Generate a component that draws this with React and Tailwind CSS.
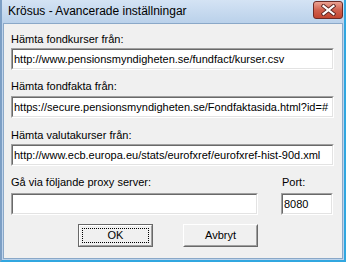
import React from "react";

const font = { fontFamily: '"Liberation Sans", Arial, sans-serif' };

function TextBox({ value, className = "" }) {
  return (
    <div
      className={
        "h-[22px] bg-white border border-t-[#a0a0a0] border-l-[#a0a0a0] border-b-white border-r-white " +
        className
      }
    >
      <div className="h-full border border-t-[#696969] border-l-[#696969] border-b-[#e3e3e3] border-r-[#e3e3e3] pl-[1px] text-[11px] leading-[18px] text-black whitespace-nowrap overflow-hidden">
        {value}
      </div>
    </div>
  );
}

function Label({ children, className = "" }) {
  return <div className={"text-[11px] leading-[13px] text-black " + className}>{children}</div>;
}

export default function App() {
  return (
    <div
      className="w-[346px] h-[262px] flex flex-col bg-[#bfd4ec] border-l-2 border-l-[#7d9fc5] border-r-2 border-r-[#31a7e0] border-b-2 border-b-[#31a7e0]"
      style={font}
    >
      <div className="h-[23px] flex items-start bg-gradient-to-b from-[#d4e3f4] to-[#bad1ea] pl-[6px] pr-[1px] shrink-0">
        <div className="mt-[4px] text-[12px] leading-[14px] text-black">Krösus - Avancerade inställningar</div>
        <div className="ml-auto mt-[1px] w-[30px] h-[18px] rounded-[3px] border border-[#6d2b26] bg-gradient-to-b from-[#eaa293] via-[#d0614e] to-[#c2452f] flex items-center justify-center">
          <svg width="15" height="12" viewBox="0 0 15 12">
            <path d="M2.5 2 L12.5 10 M12.5 2 L2.5 10" stroke="#5a2420" strokeWidth="4" strokeLinecap="square" />
            <path d="M2.5 2 L12.5 10 M12.5 2 L2.5 10" stroke="#ffffff" strokeWidth="2.2" strokeLinecap="square" />
          </svg>
        </div>
      </div>
      <div className="flex-1 mx-[1px] mb-[1px] border border-[#8aa8c8] bg-[#f0f0f0] pl-[7px] pr-[8px] pt-[9px]">
        <Label>Hämta fondkurser från:</Label>
        <TextBox className="mt-[2px]" value="http://www.pensionsmyndigheten.se/fundfact/kurser.csv" />
        <Label className="mt-[10px]">Hämta fondfakta från:</Label>
        <TextBox className="mt-[3px]" value="https://secure.pensionsmyndigheten.se/Fondfaktasida.html?id=#" />
        <Label className="mt-[11px]">Hämta valutakurser från:</Label>
        <TextBox className="mt-[2px]" value="http://www.ecb.europa.eu/stats/eurofxref/eurofxref-hist-90d.xml" />
        <div className="mt-[10px] flex items-start">
          <div className="w-[247px]">
            <Label>Gå via följande proxy server:</Label>
            <TextBox className="mt-[4px]" value="" />
          </div>
          <div className="ml-[23px] w-[52px]">
            <Label className="pl-[1px]">Port:</Label>
            <TextBox className="mt-[4px]" value="8080" />
          </div>
        </div>
        <div className="mt-[9px] flex pl-[67px] gap-[30px]">
          <div className="w-[75px] h-[23px] border border-[#696969] bg-[#f0f0f0]">
            <div className="h-full border border-t-white border-l-white border-b-[#a0a0a0] border-r-[#a0a0a0] p-[2px]">
              <div className="h-full border border-dotted border-black flex items-center justify-center text-[11px]">OK</div>
            </div>
          </div>
          <div className="w-[75px] h-[23px] border border-t-white border-l-white border-b-[#696969] border-r-[#696969] bg-[#f0f0f0]">
            <div className="h-full border border-t-[#f0f0f0] border-l-[#f0f0f0] border-b-[#a0a0a0] border-r-[#a0a0a0] flex items-center justify-center text-[11px]">
              Avbryt
            </div>
          </div>
        </div>
      </div>
    </div>
  );
}
